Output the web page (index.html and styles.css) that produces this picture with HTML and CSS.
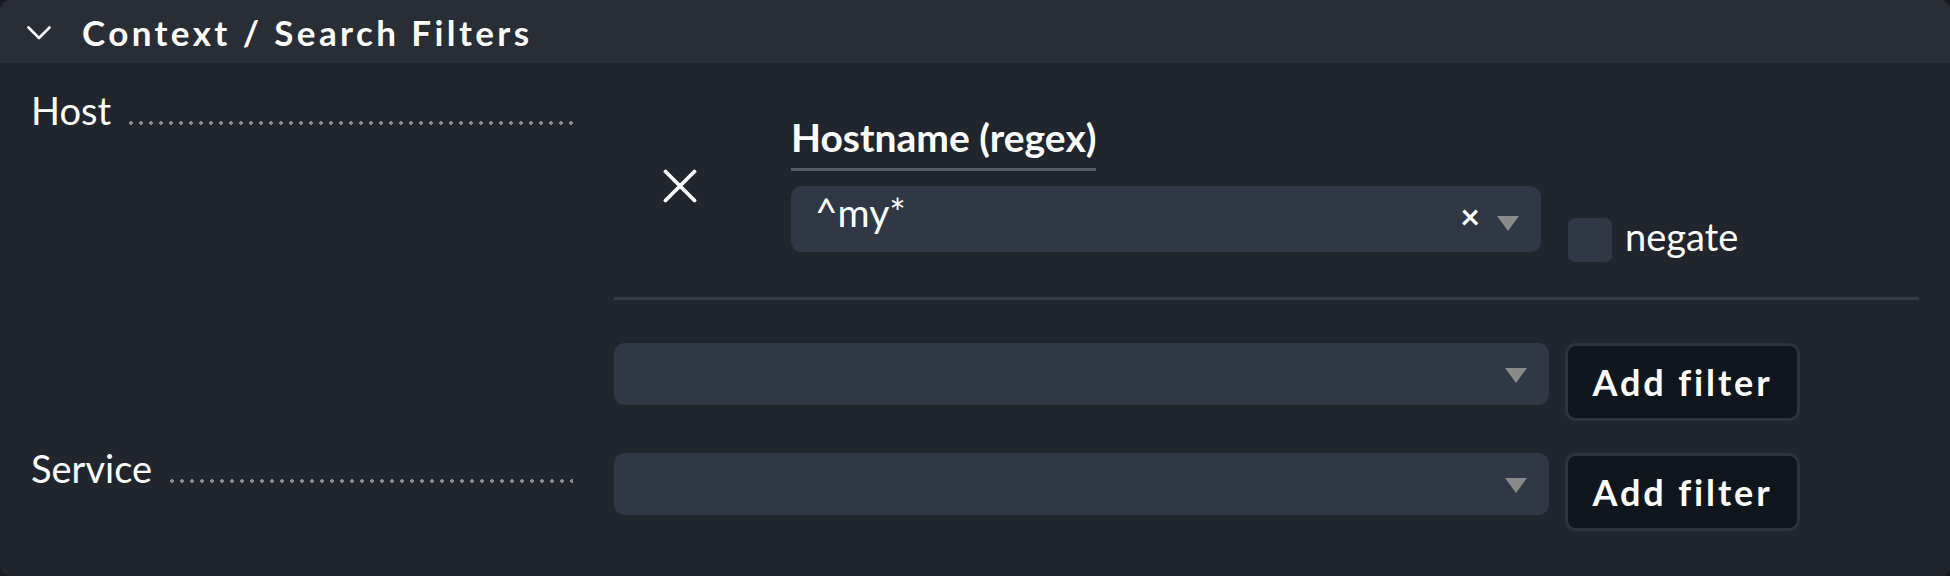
FILE: index.html
```html
<!DOCTYPE html>
<html lang="en">
<head>
<meta charset="UTF-8">
<meta name="viewport" content="width=device-width, initial-scale=1.0">
<title>Context / Search Filters</title>
<link rel="stylesheet" href="styles.css">
</head>
<body>

<div class="panel">
  <div class="panel-head">
    <svg class="chevron" viewBox="0 0 24 14" width="24" height="14">
      <polyline points="1.5,1.5 12,12 22.5,1.5" fill="none" stroke="#fff" stroke-width="2.6" stroke-linecap="round" stroke-linejoin="round"/>
    </svg>
    <span class="panel-title">Context / Search Filters</span>
  </div>

  <div class="filter-row">
    <div class="legend">
      <span class="legend-text">Host</span>
      <span class="leader"></span>
    </div>
    <div class="filter-cell">
      <div class="filter-item">
        <button class="remove" title="Remove filter">
          <svg viewBox="0 0 34 34" width="34" height="34">
            <path d="M2.5 2.5 L31.5 31.5 M31.5 2.5 L2.5 31.5" stroke="#fff" stroke-width="3.8" stroke-linecap="round"/>
          </svg>
        </button>
        <div class="filter-field">
          <span class="field-title">Hostname (regex)</span>
          <div class="field-line">
            <div class="combo">
              <span class="combo-value">^my*</span>
              <span class="combo-clear">&times;</span>
              <span class="caret"></span>
            </div>
            <label class="negate">
              <span class="check"></span>
              <span class="negate-text">negate</span>
            </label>
          </div>
        </div>
      </div>
      <div class="add-row">
        <div class="combo empty"><span class="caret"></span></div>
        <button class="add-btn">Add filter</button>
      </div>
    </div>
  </div>

  <div class="filter-row">
    <div class="legend">
      <span class="legend-text">Service</span>
      <span class="leader"></span>
    </div>
    <div class="filter-cell">
      <div class="add-row first">
        <div class="combo empty"><span class="caret"></span></div>
        <button class="add-btn">Add filter</button>
      </div>
    </div>
  </div>
</div>

</body>
</html>
```

FILE: styles.css
```css
body {
  margin: 0;
  background-color: #181c22;
  font-family: 'Lato', sans-serif;
  color: #fff;
}

.panel {
  height: 576px;
  background-color: #21262e;
  border-radius: 10px;
  overflow: hidden;
}

.panel-head {
  height: 63px;
  display: flex;
  align-items: center;
  background-color: #282d36;
  padding-left: 27px;
}

.chevron {
  margin-top: 2px;
}

.panel-title {
  margin-left: 31px;
  font-size: 35px;
  font-weight: 700;
  letter-spacing: 3.4px;
  margin-top: 1px;
}

.filter-row {
  display: grid;
  grid-template-columns: 614px 1fr;
}

.legend {
  display: flex;
  align-items: baseline;
  padding: 24px 41px 0 31px;
  font-size: 38px;
}

.leader {
  flex: 1;
  height: 4px;
  margin-left: 15px;
  background: radial-gradient(circle, #8c8c8c 1.6px, transparent 2px) 0 0 / 10px 4px repeat-x;
}

.filter-cell {
  padding: 32px 31px 0 0;
}

.filter-item {
  display: flex;
  align-items: center;
  padding: 19px 0 35px 49px;
  border-bottom: 3px solid #343b46;
}

.remove {
  background: none;
  border: none;
  padding: 0;
  width: 34px;
  height: 34px;
  margin-right: 94px;
  margin-top: -4px;
  cursor: pointer;
}

.remove svg {
  display: block;
}

.field-title {
  display: inline-block;
  font-size: 39px;
  font-weight: 700;
  padding-bottom: 8px;
  border-bottom: 3px solid #585c64;
}

.field-line {
  display: flex;
  margin-top: 15px;
}

.combo {
  position: relative;
  width: 750px;
  height: 66px;
  box-sizing: border-box;
  background-color: #2f3844;
  border-radius: 11px;
  display: flex;
  align-items: center;
  padding-left: 24px;
}

.combo-value {
  font-size: 39px;
  margin-top: -14px;
}

.combo-clear {
  position: absolute;
  right: 61px;
  top: 13px;
  font-size: 34px;
  font-weight: 700;
  line-height: 1;
}

.caret {
  position: absolute;
  right: 22px;
  top: 30px;
  width: 0;
  height: 0;
  border-left: 11.5px solid transparent;
  border-right: 11.5px solid transparent;
  border-top: 15px solid #8a8a8a;
}

.combo.empty {
  width: 935px;
  height: 62px;
}

.combo.empty .caret {
  top: 25px;
}

.negate {
  display: flex;
  align-items: flex-end;
  margin: 30px 0 0 27px;
  font-size: 38px;
}

.negate-text {
  position: relative;
  top: -3px;
}

.check {
  width: 44px;
  height: 44px;
  border-radius: 7px;
  background-color: #2f3844;
  margin-right: 13px;
}

.add-row {
  display: flex;
  align-items: flex-start;
  gap: 16px;
  margin-top: 43px;
}

.add-row.first {
  margin-top: 0;
}

.add-btn {
  width: 235px;
  height: 78px;
  padding: 0;
  background-color: #10161d;
  border: 3px solid #2c333e;
  border-radius: 11px;
  color: #fff;
  font-family: 'Lato', sans-serif;
  font-size: 36px;
  font-weight: 700;
  letter-spacing: 2.9px;
  cursor: pointer;
}
```
